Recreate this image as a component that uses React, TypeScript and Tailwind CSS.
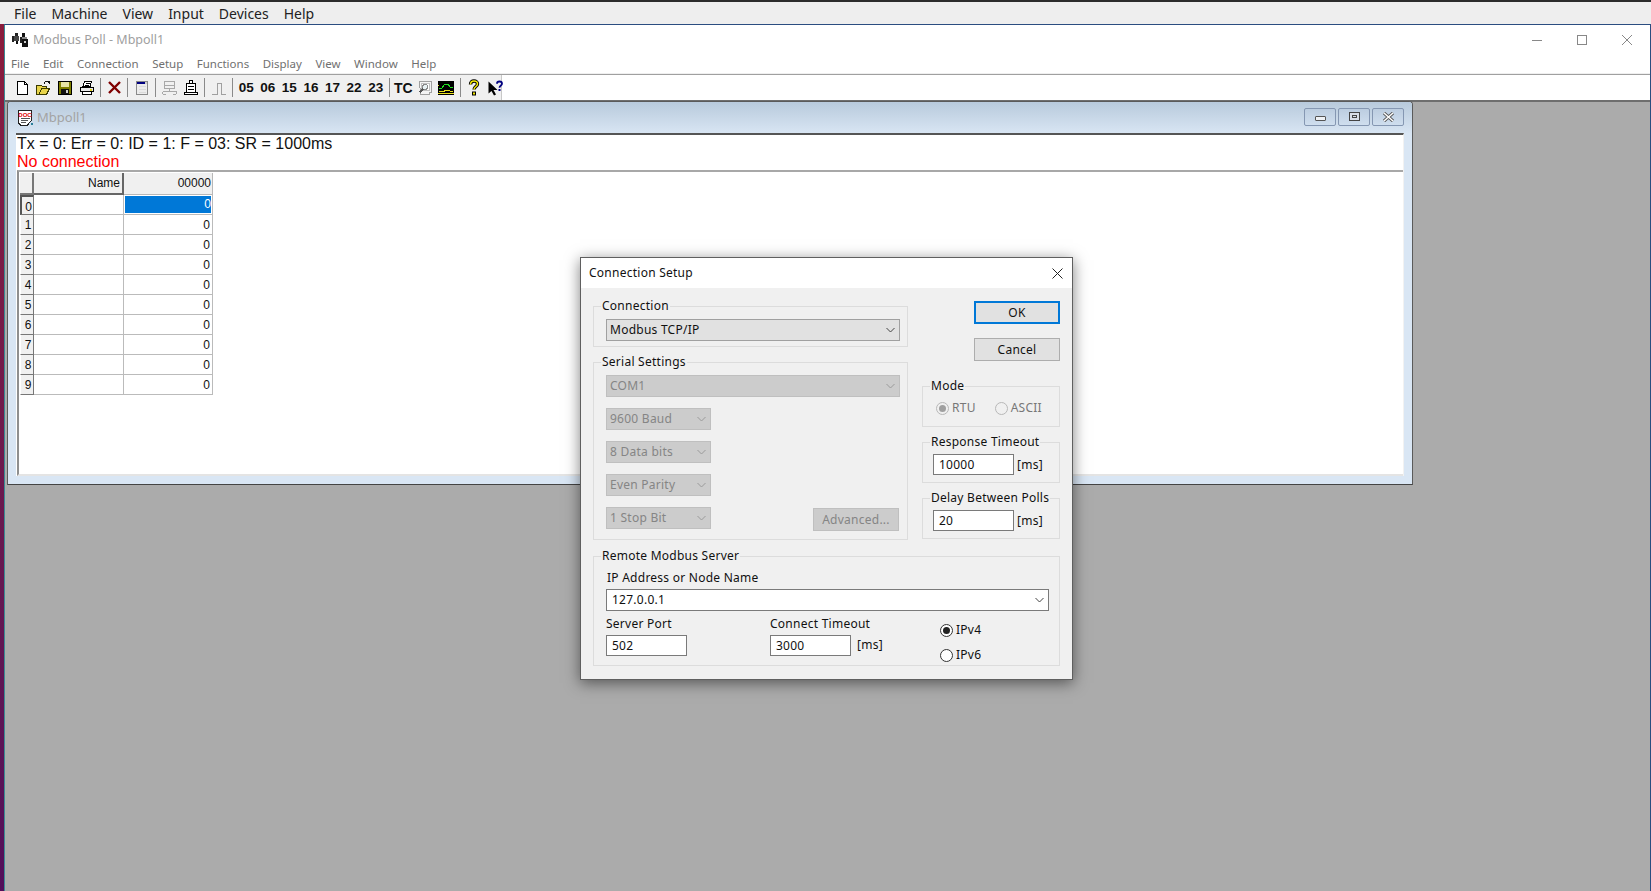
import React from "react";

const ui = "font-['Noto_Sans',sans-serif]";

function Btn({ children, w = "w-[21.6px]" }: { children: React.ReactNode; w?: string }) {
  return <div className={`${w} h-[25px] flex items-center justify-center shrink-0`}>{children}</div>;
}
function Sep({ cls = "mx-[2.5px]" }: { cls?: string }) {
  return <div className={`w-[1px] h-[19px] bg-[#8a8a8a] shrink-0 ${cls}`} />;
}
function Num({ t }: { t: string }) {
  return (
    <Btn>
      <span className="font-['Liberation_Sans',sans-serif] font-bold text-[13.5px] text-[#111] leading-none">{t}</span>
    </Btn>
  );
}

const I = ({ children, w = 16, h = 16 }: { children: React.ReactNode; w?: number; h?: number }) => (
  <svg width={w} height={h} viewBox={`0 0 ${w} ${h}`} shapeRendering="crispEdges">{children}</svg>
);

const NewIcon = () => (
  <I><path d="M3.5 1.5h7l3 3v10h-10z" fill="#fff" stroke="#000" /><path d="M10.5 1.5v3h3" fill="none" stroke="#000" /></I>
);
const OpenIcon = () => (
  <I>
    <path d="M1.5 5.5h5l1 1h4v2h3l-3 6h-10z" fill="#e8d44a" stroke="#3a3a00" />
    <path d="M4 14l3-5.5h7" fill="none" stroke="#3a3a00" />
    <path d="M9 3.5c1-2 3-2.500 4.500-1.500" fill="none" stroke="#111" strokeWidth="1" />
    <path d="M11.500 1h3v3z" fill="#111" />
  </I>
);
const SaveIcon = () => (
  <I>
    <rect x="1.500" y="1.500" width="13" height="13" fill="#808000" stroke="#000" />
    <rect x="4" y="2" width="8" height="5" fill="#e9e6a8" />
    <rect x="4" y="9" width="8" height="5" fill="#111" />
    <rect x="9" y="10" width="2" height="3" fill="#d0d0d0" />
  </I>
);
const PrintIcon = () => (
  <I>
    <path d="M5.500 1.500h7l-1.500 5h-7z" fill="#fff" stroke="#000" />
    <path d="M1.500 7.500h13v4h-13z" fill="#e8e8e8" stroke="#000" />
    <path d="M3.500 11.500h9v3h-9z" fill="#fff" stroke="#000" />
    <rect x="7" y="2.500" width="4" height="1" fill="#000" />
    <rect x="6" y="4.500" width="4" height="1" fill="#000" />
    <rect x="11" y="8.500" width="2" height="2" fill="#e0d020" />
  </I>
);
const XIcon = () => (
  <svg width="15" height="15" viewBox="0 0 15 15">
    <path d="M2 2l11 11M13 2L2 13" stroke="#800000" strokeWidth="2.400" />
  </svg>
);
const WinIcon = () => (
  <I>
    <rect x="2.500" y="1.500" width="11" height="13" fill="#ececec" stroke="#8a8a8a" />
    <rect x="3" y="2" width="10" height="2" fill="#000080" />
    <rect x="11" y="2" width="2" height="2" fill="#d0d0d0" />
    <path d="M4.500 6.500h7M4.500 9.500h7M4.500 12.500h7" stroke="#dadada" />
  </I>
);
const NetIcon = () => (
  <I>
    <rect x="3.500" y="1.500" width="10" height="4" fill="#f0f0f0" stroke="#a8a8a8" />
    <rect x="3.500" y="5.500" width="10" height="3" fill="#f0f0f0" stroke="#a8a8a8" />
    <path d="M8.500 8.500v3M1.500 11.500h14M1.500 11.500v2M5 14.500h-3M15.500 11.500v2M12 14.500h3" stroke="#a8a8a8" fill="none" />
  </I>
);
const ConnIcon = () => (
  <I>
    <rect x="6.500" y="0.500" width="3" height="3" fill="#fff" stroke="#000" />
    <rect x="3.500" y="3.500" width="9" height="9" fill="#fff" stroke="#000" />
    <path d="M5 6.500h6M5 9.500h6" stroke="#000" />
    <rect x="1.500" y="12.500" width="13" height="2" fill="#fff" stroke="#000" />
  </I>
);
const PulseIcon = () => (
  <I><path d="M1 14.500h5.500v-11h4v11h4.500" fill="none" stroke="#a0a0a0" /></I>
);
const ZoomDoc = () => (
  <I>
    <path d="M2.500 1.500h12v11h-2v2h-9z" fill="#f4f4f4" stroke="#a0a0a0" />
    <rect x="4.500" y="3.500" width="8" height="7" fill="#fff" stroke="#c0c0c0" />
    <circle cx="8" cy="7" r="2.500" fill="#e8f2f4" stroke="#8a8a8a" />
    <path d="M6 9l-3.500 3.500" stroke="#555" strokeWidth="1.500" />
  </I>
);
const ChartIcon = () => (
  <I>
    <rect x="0" y="1" width="16" height="14" fill="#000" />
    <path d="M1 8h3l3-4h3l2 3h3" fill="none" stroke="#20e020" />
    <path d="M1 11h5v-1h5l1 1h3" fill="none" stroke="#e8e020" />
    <rect x="0" y="13" width="16" height="1" fill="#e8e020" />
    <rect x="0" y="5" width="1" height="1" fill="#e8e020" />
  </I>
);
const HelpIcon = () => (
  <svg width="14" height="17" viewBox="0 0 14 17">
    <path d="M3.500 5.500C3.500 3 5 2 7 2s3.500 1 3.500 3c0 2.500-3.500 2.500-3.500 5.500" fill="none" stroke="#000" strokeWidth="3.400" />
    <path d="M3.500 5.500C3.500 3 5 2 7 2s3.500 1 3.500 3c0 2.500-3.500 2.500-3.500 5.500" fill="none" stroke="#f4e800" strokeWidth="1.500" />
    <rect x="5" y="12.500" width="4" height="4" fill="#000" />
    <rect x="6" y="13.500" width="2" height="2" fill="#f4e800" />
  </svg>
);
const CursorHelp = () => (
  <svg width="16" height="16" viewBox="0 0 16 16">
    <path d="M0.500 1.500l0 12 3-2.500 2.500 4.500 2-1-2.500-4.500h4z" fill="#000" />
    <path d="M9 3.800C9 2.300 10 1.500 11.500 1.500S14 2.300 14 3.800c0 1.800-2.500 1.800-2.500 4" fill="none" stroke="#000080" strokeWidth="1.800" />
    <rect x="10.500" y="9" width="2" height="2" fill="#000080" />
  </svg>
);
const AppIcon = () => (
  <svg width="16" height="15" viewBox="0 0 16 15" shapeRendering="crispEdges">
    <rect x="0" y="3" width="2" height="6" fill="#222" />
    <rect x="3" y="0" width="3" height="3" fill="#222" />
    <rect x="2" y="3" width="5" height="5" fill="#444" />
    <rect x="4" y="8" width="2" height="3" fill="#111" />
    <rect x="8" y="4" width="2" height="6" fill="#222" />
    <rect x="10" y="0" width="3" height="4" fill="#111" />
    <rect x="10" y="4" width="5" height="2" fill="#888" />
    <rect x="10" y="6" width="6" height="8" fill="#111" />
    <rect x="12" y="8" width="2" height="2" fill="#ccc" />
  </svg>
);
const DocIcon = () => (
  <svg width="16" height="16" viewBox="0 0 16 16">
    <path d="M1.500 0.500h13v10l-4 4.500h-7l-2-2z" fill="#fff" stroke="#222" shapeRendering="crispEdges" />
    <text x="8" y="6.500" textAnchor="middle" fontFamily="Liberation Sans, sans-serif" fontWeight="700" fontSize="6" fill="#e00000">DOC</text>
    <path d="M3.500 8.500h9M3.500 10.500h7M3.500 12.500h5" stroke="#555" shapeRendering="crispEdges" />
    <rect x="14" y="13" width="2" height="2" fill="#2a7f9a" />
  </svg>
);

function Chevron({ color = "#555" }: { color?: string }) {
  return (
    <svg width="9" height="6" viewBox="0 0 9 6" className="shrink-0">
      <path d="M0.500 1l4 4 4-4" fill="none" stroke={color} strokeWidth="1" />
    </svg>
  );
}

function Select({ label, w, disabled, white }: { label: string; w: string; disabled?: boolean; white?: boolean }) {
  const c = white
    ? "bg-white border-[#7a7a7a] text-[#111]"
    : disabled
    ? "bg-[#cccccc] border-[#bfbfbf] text-[#858585]"
    : "bg-[#e1e1e1] border-[#a0a0a0] text-[#111]";
  return (
    <div className={`${w} h-[22px] border flex items-center justify-between pr-[4px] ${white ? "pl-[5px]" : "pl-[3px]"} ${c}`}>
      <span>{label}</span>
      <Chevron color={disabled ? "#9a9a9a" : "#444"} />
    </div>
  );
}

function Group({ title, cls, children }: { title: string; cls: string; children: React.ReactNode }) {
  return (
    <div className={`relative border border-[#dcdcdc] ${cls}`}>
      <span className="absolute -top-[10px] left-[7px] bg-[#f0f0f0] px-[1px] leading-[18px] text-[#111] whitespace-nowrap">{title}</span>
      {children}
    </div>
  );
}

function Field({ value, w = "w-[81px]" }: { value: string; w?: string }) {
  return (
    <div className={`${w} h-[21px] bg-white border border-[#7a7a7a] pl-[5px] flex items-center text-[#111]`}>{value}</div>
  );
}

function Radio({ on, disabled }: { on?: boolean; disabled?: boolean }) {
  return (
    <span
      className={`w-[13px] h-[13px] rounded-full border flex items-center justify-center shrink-0 ${
        disabled ? "border-[#b8b8b8] bg-[#f0f0f0]" : "border-[#333] bg-white"
      }`}
    >
      {on && <span className={`w-[7px] h-[7px] rounded-full ${disabled ? "bg-[#a0a0a0]" : "bg-[#222]"}`} />}
    </span>
  );
}

function Dialog() {
  return (
    <div className={`absolute left-[580px] top-[257px] w-[493px] h-[423px] bg-[#f0f0f0] border border-[#5f5f5f] shadow-[0_3px_14px_rgba(0,0,0,0.5)] ${ui} text-[12px] tracking-[0.25px] text-[#111] flex flex-col`}>
      <div className="h-[30px] bg-white flex items-center justify-between pl-[8px] pr-[9px] shrink-0">
        <span className="text-[12px]">Connection Setup</span>
        <svg width="11" height="11" viewBox="0 0 11 11"><path d="M0.500 0.500l10 10M10.500 0.500l-10 10" stroke="#222" strokeWidth="1" /></svg>
      </div>
      <div className="px-[12px] pt-[13px]">
        <div className="flex justify-between">
          <div className="w-[315px] pt-[5px] flex flex-col gap-[15px]">
            <Group title="Connection" cls="h-[41px] pl-[12px] pt-[12px]">
              <Select label="Modbus TCP/IP" w="w-[294px]" />
            </Group>
            <Group title="Serial Settings" cls="h-[178px] pl-[12px] pt-[12px] flex flex-col gap-[11px]">
              <Select label="COM1" w="w-[294px]" disabled />
              <Select label="9600 Baud" w="w-[105px]" disabled />
              <Select label="8 Data bits" w="w-[105px]" disabled />
              <Select label="Even Parity" w="w-[105px]" disabled />
              <div className="flex justify-between pr-[8px] items-start">
                <Select label="1 Stop Bit" w="w-[105px]" disabled />
                <div className="w-[86px] h-[23px] bg-[#cccccc] border border-[#bfbfbf] text-[#858585] flex items-center justify-center mt-[1px]">Advanced...</div>
              </div>
            </Group>
          </div>
          <div className="w-[138px] flex flex-col">
            <div className="self-end w-[86px] h-[23px] border-2 border-[#0078d7] bg-[#e1e1e1] flex items-center justify-center">OK</div>
            <div className="self-end w-[86px] h-[23px] border border-[#adadad] bg-[#e1e1e1] flex items-center justify-center mt-[14px]">Cancel</div>
            <Group title="Mode" cls="h-[41px] mt-[25px] pl-[13px] flex items-center gap-[19px] pt-[3px]">
              <span className="flex items-center gap-[3px] text-[#777]"><Radio on disabled />RTU</span>
              <span className="flex items-center gap-[3px] text-[#777]"><Radio disabled />ASCII</span>
            </Group>
            <Group title="Response Timeout" cls="h-[41px] mt-[15px] pl-[10px] pt-[11px] flex items-start gap-[3px]">
              <Field value="10000" />
              <span className="leading-[22px]">[ms]</span>
            </Group>
            <Group title="Delay Between Polls" cls="h-[41px] mt-[15px] pl-[10px] pt-[11px] flex items-start gap-[3px]">
              <Field value="20" />
              <span className="leading-[22px]">[ms]</span>
            </Group>
          </div>
        </div>
        <Group title="Remote Modbus Server" cls="h-[110px] mt-[16px] pl-[12px] pt-[12px]">
          <div className="h-[20px] pl-[1px] leading-[17px]">IP Address or Node Name</div>
          <Select label="127.0.0.1" w="w-[443px]" white />
          <div className="flex mt-[3px]">
            <div className="w-[164px]">
              <div className="h-[21px] leading-[20px]">Server Port</div>
              <Field value="502" />
            </div>
            <div className="w-[170px]">
              <div className="h-[21px] leading-[20px]">Connect Timeout</div>
              <div className="flex items-start gap-[6px]">
                <Field value="3000" />
                <span className="leading-[19px]">[ms]</span>
              </div>
            </div>
            <div className="pt-[9px] flex flex-col gap-[11px]">
              <span className="flex items-center gap-[3px] leading-[14px]"><Radio on />IPv4</span>
              <span className="flex items-center gap-[3px] leading-[14px]"><Radio />IPv6</span>
            </div>
          </div>
        </Group>
      </div>
    </div>
  );
}

function MdiButton({ children }: { children: React.ReactNode }) {
  return (
    <div className="w-[32px] h-[18px] rounded-[2px] border border-[#8597b2] bg-gradient-to-b from-[#bccde0] to-[#cfdeee] flex items-center justify-center">
      {children}
    </div>
  );
}

function ChildWindow() {
  const rows = [0, 1, 2, 3, 4, 5, 6, 7, 8, 9];
  return (
    <div className="absolute left-[2px] top-[1px] w-[1406px] h-[384px] rounded-t-[4px] border border-[#5a5a5a] border-b-[#444] bg-[#d9e6f4] flex flex-col">
      <div className="h-[31px] shrink-0 bg-gradient-to-b from-[#b8cadc] to-[#d8e5f3] rounded-t-[3px] flex items-center pl-[9px] pr-[8px] justify-between">
        <div className="flex items-center gap-[4px]">
          <DocIcon />
          <span className="font-['Noto_Sans',sans-serif] text-[13px] text-[#a3a3a3]">Mbpoll1</span>
        </div>
        <div className="flex gap-[2px] pb-[1px]">
          <MdiButton>
            <span className="w-[11px] h-[5px] mt-[2px] rounded-[1px] bg-[#eef1f5] border border-[#555]" />
          </MdiButton>
          <MdiButton>
            <span className="w-[11px] h-[9px] mb-[1px] bg-[#d8dde6] border-[1.5px] border-[#444] flex items-center justify-center"><span className="w-[5px] h-[3px] border border-[#444]" /></span>
          </MdiButton>
          <MdiButton>
            <svg width="13" height="10" viewBox="0 0 13 10"><path d="M2 1l9 8M11 1L2 9" stroke="#555" strokeWidth="3.200" /><path d="M2 1l9 8M11 1L2 9" stroke="#fff" strokeWidth="1.500" /></svg>
          </MdiButton>
        </div>
      </div>
      <div className="mx-[8px] flex-1 mb-[8px] bg-white border-t-2 border-t-[#555] border-r border-r-[#f2f2f2] flex flex-col">
        <div className="h-[35px] shrink-0 pl-[1px] font-['Liberation_Sans',sans-serif] text-[16px] leading-[18px]">
          <div className="text-[#111]">Tx = 0: Err = 0: ID = 1: F = 03: SR = 1000ms</div>
          <div className="text-[#ff0000]">No connection</div>
        </div>
        <div className="flex-1 border-t-2 border-t-[#a8a8a8] border-l-2 border-l-[#8f8f8f] border-b-2 border-b-[#e4e4e4] ml-[1px] pl-[1px] pt-[1px] font-['Liberation_Sans',sans-serif] text-[12px] text-[#111]">
          <div className="grid grid-cols-[14px_90px_89px] w-[193px]">
            <div className="h-[22px] bg-[#f0f0f0] border-r-2 border-b-2 border-r-[#777] border-b-[#777]" />
            <div className="h-[22px] bg-[#f0f0f0] border-r-2 border-b-2 border-[#666] text-right pr-[2px] leading-[20px]">Name</div>
            <div className="h-[22px] bg-[#f0f0f0] border-r border-b border-[#b8b8b8] text-right pr-[1px] leading-[20px]">00000</div>
            {rows.map((r) => (
              <React.Fragment key={r}>
                <div className={`h-[20px] bg-[#f0f0f0] text-center border-r border-b border-r-[#777] border-b-[#777] leading-[20px] pl-[2px] ${r === 0 ? "border-l-2 border-t-2 border-l-[#555] border-t-[#555]" : "border-l border-l-white"}`}>{r}</div>
                <div className="h-[20px] border-r border-b border-[#bbb]" />
                <div className="h-[20px] border-r border-b border-[#bbb] text-right leading-[20px]">
                  {r === 0 ? (
                    <div className="h-[17px] mt-[1px] ml-[1px] mr-[1px] bg-[#0078d7] text-white leading-[17px]">0</div>
                  ) : (
                    <span className="pr-[2px]">0</span>
                  )}
                </div>
              </React.Fragment>
            ))}
          </div>
        </div>
      </div>
    </div>
  );
}

export default function App() {
  return (
    <div className="relative w-[1651px] h-[891px] overflow-hidden bg-[#ababab]">
      <div className="h-[2px] bg-[#2b2b2b]" />
      <div className={`h-[22px] bg-[#eeeeee] pl-[14px] flex items-center gap-[15px] text-[14px] text-[#222] ${ui}`}>
        {["File", "Machine", "View", "Input", "Devices", "Help"].map((m) => (
          <span key={m}>{m}</span>
        ))}
      </div>
      <div className="flex h-[867px]">
        <div className="w-[4px] bg-gradient-to-b from-[#8a1c3c] to-[#520e5a] shrink-0" />
        <div className="flex-1 flex flex-col border-t border-t-[#2a4d80] border-r border-r-[#2a4d80] border-l border-l-[#3b8a94] min-w-0">
          <div className={`h-[30px] bg-white shrink-0 flex items-center pl-[7px] pr-[18px] ${ui} justify-between`}>
            <div className="flex items-center gap-[5px]">
              <AppIcon />
              <span className="text-[12.5px] text-[#a0a0a0]">Modbus Poll - Mbpoll1</span>
            </div>
            <div className="flex items-center gap-[35px]">
              <span className="w-[10px] h-[1px] bg-[#888]" />
              <span className="w-[10px] h-[10px] border border-[#888]" />
              <svg width="10" height="10" viewBox="0 0 10 10"><path d="M0 0l10 10M10 0L0 10" stroke="#888" strokeWidth="1" /></svg>
            </div>
          </div>
          <div className={`h-[18px] bg-white shrink-0 flex items-center pl-[6px] gap-[13.500px] text-[11.500px] text-[#707070] ${ui}`}>
            {["File", "Edit", "Connection", "Setup", "Functions", "Display", "View", "Window", "Help"].map((m) => (
              <span key={m}>{m}</span>
            ))}
          </div>
          <div className="h-[2px] shrink-0 bg-[#efefef] border-b border-b-[#a0a0a0]" />
          <div className="h-[25px] shrink-0 bg-white flex">
            <div className="w-[497px] bg-[#f0f0f0] flex items-center pl-[6px] border-r border-r-[#c8c8c8]">
              <Btn><NewIcon /></Btn>
              <Btn><OpenIcon /></Btn>
              <Btn><SaveIcon /></Btn>
              <Btn><PrintIcon /></Btn>
              <Sep />
              <Btn><XIcon /></Btn>
              <Sep />
              <Btn><WinIcon /></Btn>
              <Sep />
              <Btn><NetIcon /></Btn>
              <Btn><ConnIcon /></Btn>
              <Sep />
              <Btn><PulseIcon /></Btn>
              <Sep />
              {["05", "06", "15", "16", "17", "22", "23"].map((n) => (
                <Num key={n} t={n} />
              ))}
              <Sep />
              <Btn>
                <span className="font-['Liberation_Sans',sans-serif] font-bold text-[14px] text-[#111] leading-none">TC</span>
              </Btn>
              <Btn><ZoomDoc /></Btn>
              <Btn><ChartIcon /></Btn>
              <Sep />
              <Btn><HelpIcon /></Btn>
              <Btn><CursorHelp /></Btn>
            </div>
          </div>
          <div className="flex-1 relative bg-[#ababab] shadow-[inset_0_2px_0_#6e6e6e]">
            <ChildWindow />
          </div>
        </div>
      </div>
      <Dialog />
    </div>
  );
}
